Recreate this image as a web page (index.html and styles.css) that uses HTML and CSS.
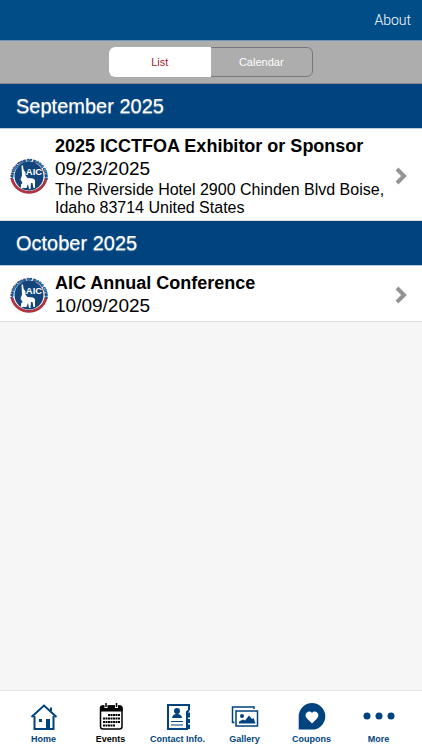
FILE: index.html
```html
<!DOCTYPE html>
<html lang="en">
  <head>
    <title>Events</title>
    <meta charset="utf-8" />
    <meta name="viewport" content="width=device-width, initial-scale=1.0" />
    <link rel="stylesheet" href="styles.css">
  </head>
  <body>
    <svg class="defs" width="0" height="0" aria-hidden="true">
      <defs>
        <path id="ring" d="M9 51A32 32 0 1 1 71 51" />
        <symbol id="logo" viewBox="0 0 80 80">
          <text class="ring-text"><textPath href="#ring" startOffset="50%">ASSOCIATION OF IDAHO CITIES</textPath></text>
          <path d="M6 46a35 35 0 0 0 68 0" fill="none" stroke="#ae3444" stroke-width="6" />
          <circle cx="40" cy="40" r="29" fill="#12457b" />
          <path d="M25 19h3l1 8 4 6v6l4 5 11 1 4 3v16h-3l-2-10h-3l-1 12h-3l-2-10-3 8H24v-7l3-3-4-7 3-8z" fill="#fff" />
          <text class="logo-text" x="50" y="37">AIC</text>
        </symbol>
      </defs>
    </svg>

    <header class="topbar">
      <a class="about" href="#about">About</a>
    </header>

    <div class="switcher">
      <div class="segments">
        <button class="segment active" type="button">List</button>
        <button class="segment" type="button">Calendar</button>
      </div>
    </div>

    <main class="events">
      <h2 class="month">September 2025</h2>
      <a class="event" href="#icctfoa">
        <svg class="logo" role="img" aria-label="AIC"><use href="#logo" /></svg>
        <div class="details">
          <h3 class="title">2025 ICCTFOA Exhibitor or Sponsor</h3>
          <p class="date">09/23/2025</p>
          <p class="place">The Riverside Hotel 2900 Chinden Blvd Boise, Idaho 83714 United States</p>
        </div>
        <svg class="chevron" viewBox="0 0 12 18"><path d="M2 2l7 7-7 7" /></svg>
      </a>
      <h2 class="month">October 2025</h2>
      <a class="event" href="#annual">
        <svg class="logo" role="img" aria-label="AIC"><use href="#logo" /></svg>
        <div class="details">
          <h3 class="title">AIC Annual Conference</h3>
          <p class="date">10/09/2025</p>
        </div>
        <svg class="chevron" viewBox="0 0 12 18"><path d="M2 2l7 7-7 7" /></svg>
      </a>
    </main>

    <nav class="tabs">
      <a class="tab" href="#home">
        <svg class="icon" viewBox="0 0 30 30">
          <path d="M2.5 15L15 3.5 27.5 15M5.5 14v13h19V14M22 9V5.5" fill="none" stroke="currentColor" stroke-width="2" />
          <path d="M17 17h4v10h-4zM10 17h3v3h-3z" fill="currentColor" />
        </svg>
        Home
      </a>
      <a class="tab current" href="#events">
        <svg class="icon" viewBox="0 0 30 30">
          <rect x="4.5" y="4" width="21.5" height="23" rx="2.5" fill="none" stroke="currentColor" stroke-width="1.5" />
          <path d="M4 9.500V6q0-2.500 2.500-2.500H24q2.500 0 2.500 2.500v3.500z" fill="currentColor" />
          <path d="M10 1v5M20.5 1v5" stroke="#fff" stroke-width="3" />
          <path d="M10 1v4M20.5 1v4" stroke="currentColor" stroke-width="1.5" />
          <path d="M12 13h12M7 16.500h17M7 20h17M7 23.500h12" fill="none" stroke="currentColor" stroke-width="2" stroke-dasharray="2 .5" />
        </svg>
        Events
      </a>
      <a class="tab" href="#contact">
        <svg class="icon" viewBox="0 0 30 30">
          <path d="M26 8V3H5v24h19V10l2-2" fill="none" stroke="currentColor" stroke-width="2" />
          <path d="M25 10.500h2v5h-2zM25 17h2v4h-2zM25 22.500h2v4.500h-2z" fill="currentColor" />
          <circle cx="14" cy="9" r="3" fill="currentColor" />
          <path d="M9 16q0-3.500 5-4.500 5 1 5 4.500z" fill="currentColor" />
          <path d="M8 19.500h12M8 23h12" stroke="currentColor" stroke-width="1" />
        </svg>
        Contact Info.
      </a>
      <a class="tab" href="#gallery">
        <svg class="icon" viewBox="0 0 30 30">
          <path d="M4.500 20.500h-2V5H24v2" fill="none" stroke="currentColor" stroke-width="1.5" />
          <rect x="6" y="9" width="21.5" height="15" fill="none" stroke="currentColor" stroke-width="1.5" />
          <circle cx="12" cy="14" r="2" fill="currentColor" />
          <path d="M9 21.500v-2l4-2 2 1 4-5 3 3.500 1.500-1 2 5.500z" fill="currentColor" />
        </svg>
        Gallery
      </a>
      <a class="tab" href="#coupons">
        <svg class="icon" viewBox="0 0 30 30">
          <path d="M15 1A13.300 13.300 0 1 1 15 27.600H1.700V14.300A13.300 13.300 0 0 1 15 1z" fill="currentColor" />
          <path d="M15 21.500l-5-5c-4-4 1.500-9.500 5-5.500 3.500-4 9 1.500 5 5.500z" fill="#fff" />
        </svg>
        Coupons
      </a>
      <a class="tab" href="#more">
        <svg class="icon" viewBox="0 0 30 30" fill="currentColor">
          <circle cx="3" cy="14" r="3.5" />
          <circle cx="15" cy="14" r="3.5" />
          <circle cx="27" cy="14" r="3.5" />
        </svg>
        More
      </a>
    </nav>
  </body>
</html>
```
FILE: styles.css
```css
html,
body {
  margin: 0;
  padding: 0;
  height: 100%;
}
body {
  display: flex;
  flex-direction: column;
  font: 16px "Liberation Sans", Arial, sans-serif;
  color: #000;
  background: #f6f6f6;
}
a {
  color: inherit;
  text-decoration: none;
}
.defs {
  position: absolute;
}
.topbar {
  display: flex;
  align-items: center;
  justify-content: flex-end;
  height: 40px;
  padding: 0 11px;
  color: #fff;
  background: #004d88;
  border-bottom: 1px solid #6f96b7;
}
.about {
  font: 300 14px Roboto, sans-serif;
}
.switcher {
  display: flex;
  justify-content: center;
  padding: 6px 0;
  background: #adadad;
  border-bottom: 1px solid #888;
}
.segments {
  display: flex;
  width: 204px;
  height: 30px;
  box-sizing: border-box;
  border: 1px solid #77777b;
  border-radius: 6px;
}
.segment {
  flex: 1;
  margin: 0;
  padding: 0;
  border: 0;
  font: 11px "Liberation Sans", Arial, sans-serif;
  color: #fff;
  background: none;
}
.segment.active {
  margin: -1px 0 -1px -1px;
  border-radius: 6px 0 0 6px;
  color: #a51c30;
  background: #fff;
}
.month {
  margin: 0;
  padding: 0 16px;
  font-size: 20px;
  font-weight: normal;
  line-height: 44px;
  color: #fff;
  text-shadow: 0 1px 1px #8fa9c4;
  background: #00437e;
  border-bottom: 1px solid #b7cbdc;
}
.event {
  display: flex;
  align-items: center;
  padding: 6px 15px 3px 9px;
  background: #fff;
  border-bottom: 1px solid #ddd;
}
.logo {
  flex: none;
  width: 40px;
  height: 40px;
}
.ring-text {
  font: bold 7px "Liberation Sans", Arial, sans-serif;
  text-anchor: middle;
  fill: #17518a;
  stroke: #17518a;
}
.logo-text {
  font: bold 19px "Liberation Sans", Arial, sans-serif;
  text-anchor: middle;
  fill: #fff;
}
.details {
  flex: 1;
  margin-left: 6px;
}
.title,
.date,
.place {
  margin: 0;
}
.title {
  font-size: 18px;
  line-height: 22px;
}
.date {
  font-size: 19px;
  line-height: 24px;
}
.place {
  font-size: 16px;
  line-height: 18px;
}
.chevron {
  flex: none;
  width: 12px;
  height: 18px;
  fill: none;
  stroke: #949494;
  stroke-width: 4;
}
.tabs {
  display: flex;
  margin-top: auto;
  padding: 11px 10px 3px;
  background: #fff;
  border-top: 1px solid #e6e6e6;
}
.tab {
  display: flex;
  flex: 1 1 0;
  flex-direction: column;
  align-items: center;
  min-width: 0;
  font-size: 9px;
  font-weight: bold;
  line-height: 15px;
  white-space: nowrap;
  color: #00437e;
}
.tab.current {
  color: #000;
}
.icon {
  width: 30px;
  height: 30px;
  overflow: visible;
}
```
